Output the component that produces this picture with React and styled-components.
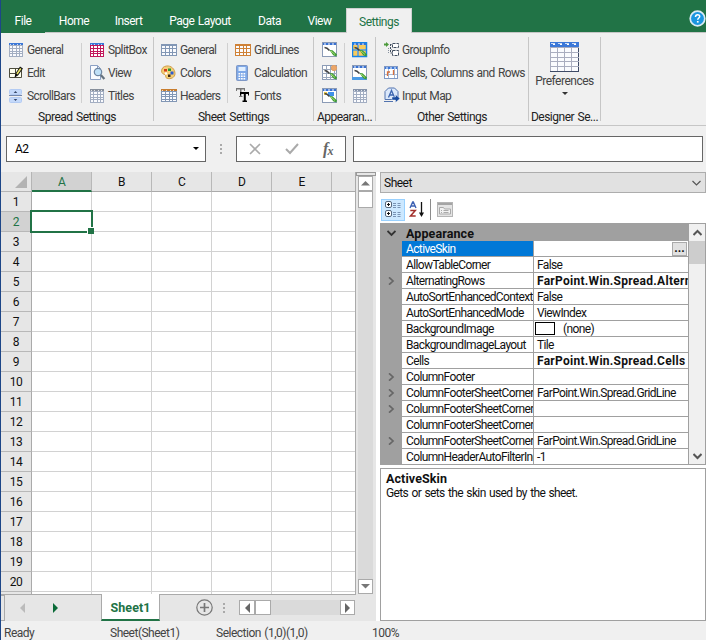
import React from 'react';
import styled, { createGlobalStyle } from 'styled-components';

const tabs = [
  { label: 'File', width: 44 },
  { label: 'Home', width: 58 },
  { label: 'Insert', width: 51 },
  { label: 'Page Layout', width: 92 },
  { label: 'Data', width: 47 },
  { label: 'View', width: 53 },
];

const columns = ['A', 'B', 'C', 'D', 'E'];
const rows = Array.from({ length: 20 }, (_, i) => i + 1);

const properties = [
  { name: 'ActiveSkin', value: '', selected: true },
  { name: 'AllowTableCorner', value: 'False' },
  { name: 'AlternatingRows', value: 'FarPoint.Win.Spread.Altern', bold: true, expand: true },
  { name: 'AutoSortEnhancedContext', value: 'False' },
  { name: 'AutoSortEnhancedMode', value: 'ViewIndex' },
  { name: 'BackgroundImage', value: '(none)', swatch: true },
  { name: 'BackgroundImageLayout', value: 'Tile' },
  { name: 'Cells', value: 'FarPoint.Win.Spread.Cells', bold: true },
  { name: 'ColumnFooter', value: '', expand: true },
  { name: 'ColumnFooterSheetCornerH', value: 'FarPoint.Win.Spread.GridLine', expand: true },
  { name: 'ColumnFooterSheetCornerS', value: '', expand: true },
  { name: 'ColumnFooterSheetCornerS', value: '' },
  { name: 'ColumnFooterSheetCornerV', value: 'FarPoint.Win.Spread.GridLine', expand: true },
  { name: 'ColumnHeaderAutoFilterInd', value: '-1' },
];

/* ---------- icons ---------- */

const Table = ({ w = 14, h = 14, head = '#3c78d8', line = '#a3aec2', cell = '#fafbfe', cols = 4, rowCount = 4, top = 2, edge = line }) => {
  const cw = (w - 1) / cols;
  const rh = (h - 1 - top) / rowCount;
  return (
    <svg width={w} height={h} shapeRendering="crispEdges">
      <rect width={w} height={h} fill={cell} />
      {Array.from({ length: cols + 1 }, (_, i) => (
        <rect key={`c${i}`} x={Math.round(i * cw)} y="0" width="1" height={h} fill={i === cols ? edge : line} />
      ))}
      {Array.from({ length: rowCount + 1 }, (_, i) => (
        <rect key={`r${i}`} x="0" y={Math.round(top + i * rh)} width={w} height="1" fill={i === rowCount ? edge : line} />
      ))}
      <rect width={w} height={top} fill={head} />
      {top > 1 &&
        Array.from({ length: cols }, (_, i) => (
          <rect key={`h${i}`} x={Math.round(i * cw) + 1} y="1" width={top > 3 ? 4 : 1} height="1" fill="#fff" opacity="0.75" />
        ))}
      {top > 3 &&
        Array.from({ length: cols }, (_, i) => (
          <rect key={`t${i}`} x={Math.round(i * cw) + 3} y="2" width="2" height="1" fill="#fff" />
        ))}
    </svg>
  );
};

const EditIcon = () => (
  <svg width="14" height="14">
    <path d="M.5 2.5h12v9H.5zM.5 7.5h6M6.5 2.5v9" fill="#fffff0" stroke="#4d4d3d" />
    <path d="M5.5 11.5l1.2-4.500L11 .5 14 2.4 9 9.500z" fill="#111" />
    <path d="M8 8l3.800-5.500" stroke="#f0e868" strokeWidth="1.600" />
  </svg>
);

const ScrollBarsIcon = () => (
  <svg width="14" height="14">
    <rect x=".5" y=".5" width="12" height="5" rx="1" fill="#c4d9fa" stroke="#b3cbf3" />
    <rect x=".5" y="8.500" width="12" height="5" rx="1" fill="#c4d9fa" stroke="#b3cbf3" />
    <path d="M4.700 4l1.800-2 1.800 2zM4.700 10l1.800 2 1.800-2z" fill="#37496b" />
    <path d="M0 6.500h13" stroke="#7386a8" />
  </svg>
);

const ViewIcon = () => (
  <svg width="16" height="16">
    <path d="M.5 .5h7l3 3v11H.5z" fill="#fafcff" stroke="#8ba0c4" />
    <path d="M7.500 .5v3h3" fill="none" stroke="#8ba0c4" />
    <circle cx="8" cy="7" r="3.700" fill="#bfe0f7" stroke="#6f87a3" strokeWidth="1.200" />
    <path d="M10.800 10l3.600 4" stroke="#65727f" strokeWidth="2.200" />
  </svg>
);

const ColorsIcon = () => (
  <svg width="15" height="15">
    <path d="M5.500 1C10 .4 14 4 14 8.600c0 4-4.400 6-8.200 4.600-2-.8-.4-2.800-2-3.600C2.400 9 .6 8.600 .6 6 .6 3.200 2.600 1.300 5.500 1z" fill="#f5cf77" stroke="#cf9d48" />
    <rect x="3" y="4" width="3" height="2.500" fill="#d33a1c" />
    <rect x="7" y="3.500" width="3" height="2.500" fill="#2d9a35" />
    <rect x="9.500" y="6.500" width="3" height="3" fill="#2c5bd0" />
    <rect x="7" y="9.500" width="2.500" height="2.500" fill="#3a2a1c" />
    <circle cx="5" cy="8.500" r="1.200" fill="#fff" />
  </svg>
);

const CalculatorIcon = () => (
  <svg width="13" height="16">
    <rect x=".5" y=".5" width="11" height="15" rx="1" fill="#7fa9e8" stroke="#7e97c4" />
    <rect x="2.500" y="2" width="7" height="4" fill="#e1efff" />
    {[8, 10.500, 13].map((y) =>
      [2.500, 5, 7.500].map((x) => <rect key={`${x}-${y}`} x={x} y={y} width="1.700" height="1.500" fill="#fff" />)
    )}
  </svg>
);

const FontsIcon = () => (
  <svg width="15" height="15">
    <path d="M0 0h9v3H8V1.500H5.500V8h1v1H3V8h1V1.500H1V3H0z" fill="#777" />
    <path d="M4 4h9v3.500h-1V6H9.800v6.500H11V14H6.500v-1.500h1.300V6H5v1.500H4z" fill="#000" />
  </svg>
);

// small sheet with a paint brush over it
const SkinIcon = ({ variant }) => {
  const selected = variant === 'selected';
  return (
    <svg width="16" height="16">
      <rect x=".5" y=".5" width="14" height="14" fill={selected ? '#f8cb5c' : '#fff'} stroke={selected ? '#1683e8' : '#8b9bb6'} />
      {variant === 'grid' && <path d="M0 4.500h15M0 8.500h15M0 12.500h15M4.500 1v14M8.500 1v14M12.500 1v14" stroke="#9aa7bb" />}
      {variant !== 'grid' && <rect x="1" y="1" width="13" height="2" fill="#3971d1" />}
      {variant !== 'grid' && <path d="M2 2h2M6 2h2M10 2h2" stroke="#fff" />}
      {selected && <path d="M1 8h13M6 3v11" stroke="#4b9be6" strokeWidth="1.500" />}
      {selected && <rect x=".5" y=".5" width="14" height="14" fill="none" stroke="#1683e8" strokeWidth="1.500" />}
      {variant === 'line' && <rect x="0" y="12" width="15" height="3" fill="#4b9be6" />}
      {variant === 'cell' && <rect x="6" y="4" width="6" height="4" fill="#3f91e9" />}
      {variant === 'cell' && <rect x="2" y="4" width="3" height="3" fill="#f4d24d" />}
      <path d="M2.500 5.500c2 0 3 .5 5 3" stroke="#444" strokeWidth="1.500" fill="none" />
      <path d="M7.500 8l3 .2 4.500 4.300-.8 2-3-1.200z" fill="#3f9c37" />
      <path d="M9 9l4 3.500" stroke="#a8dc6f" />
      {variant === 'grid' && <circle cx="12" cy="3" r="2.700" fill="#eda667" stroke="#dda06a" />}
    </svg>
  );
};

const GroupInfoIcon = () => (
  <svg width="16" height="15">
    <path d="M0 1.500h2V0l3 2.500L2 5V3.500H0z" fill="#4c9a3c" />
    <path d="M4.500 6v6M7 2.500h2M7 7.500h1" stroke="#8892a0" strokeDasharray="1 1" />
    <path d="M8.500 1.500h6v4h-6zM8.500 8.500h6v5h-6z" fill="#fff" stroke="#424f60" strokeDasharray="3 1" />
    <path d="M6.500 2v9h2" fill="none" stroke="#424f60" strokeDasharray="2 1" />
  </svg>
);

const CellsIcon = () => (
  <svg width="15" height="14">
    <rect x=".5" y=".5" width="13" height="12" fill="#fff" stroke="#7f98c4" />
    <rect x="1" y="1" width="12" height="2" fill="#3c78d8" />
    <path d="M1 8.500h12M4.500 3v9M10.500 3v9" stroke="#a8b9d6" />
    <path d="M3.500 10V6h2.500M9.500 4v5" stroke="#d8703a" fill="none" strokeWidth="1.300" />
    <path d="M2 2h2M6 2h2M10 2h2" stroke="#fff" />
  </svg>
);

const InputMapIcon = () => (
  <svg width="17" height="17">
    <path d="M1 12.500V4.500L4.500 1h6L14 4.500v8z" fill="#dbe8fb" stroke="#5273ae" />
    <path d="M0 14.500h9" stroke="#5273ae" />
    <path d="M4.500 10.500l3-7 3 7M5.500 8h4" stroke="#3d66b0" strokeWidth="1.300" fill="none" />
    <path d="M8 10h3.500V7.500l4.500 4-4.500 4V13H8z" fill="#174a9f" stroke="#fff" strokeWidth=".4" />
  </svg>
);

const HelpIcon = () => (
  <svg width="17" height="17">
    <circle cx="8.500" cy="8.500" r="7.300" fill="#1b96e0" stroke="#dcebf5" strokeWidth="1.700" />
    <path d="M6.500 7c0-3 4.200-2.800 4.200-.5 0 1.500-2 1.500-2 3.300" stroke="#fff" strokeWidth="1.500" fill="none" />
    <rect x="7.900" y="11" width="1.700" height="1.600" fill="#fff" />
  </svg>
);

const Arrow = ({ dir = 'down', size = 5, color = '#666' }) => {
  const paths = {
    down: [`M0 0h${size * 2}l-${size} ${size}z`, size * 2, size],
    up: [`M0 ${size}h${size * 2}l-${size}-${size}z`, size * 2, size],
    left: [`M${size} 0v${size * 2}l-${size}-${size}z`, size, size * 2],
    right: [`M0 0v${size * 2}l${size}-${size}z`, size, size * 2],
  };
  const [d, w, h] = paths[dir];
  return (
    <svg width={w} height={h}>
      <path d={d} fill={color} />
    </svg>
  );
};

const Chevron = ({ dir = 'down', color = '#555', thick = 1.2 }) => {
  const d = { down: 'M.5 2l4 4 4-4', up: 'M.5 6l4-4 4 4', right: 'M2 .3l4 3.700-4 3.700' };
  return (
    <svg width="9" height="8" viewBox="0 0 9 8">
      <path d={d[dir]} stroke={color} strokeWidth={thick} fill="none" />
    </svg>
  );
};

const CategorizedIcon = () => (
  <svg width="17" height="17">
    {[0.5, 9.5].map((y) => (
      <g key={y}>
        <rect x=".5" y={y} width="6" height="6" rx="1.500" fill="#fff" stroke="#56677c" />
        <path d={`M2 ${y + 3}h3M3.500 ${y + 1.5}v3`} stroke="#111" />
        <path d={`M8 ${y + 2}h3M12.500 ${y + 2}h3M8 ${y + 4}h3M12.500 ${y + 4}h3M8 ${y + 6}h3M12.500 ${y + 6}h3`} stroke="#7892b3" />
      </g>
    ))}
  </svg>
);

const SortIcon = () => (
  <svg width="16" height="17">
    <path d="M1 7l2.700-6h.6L7 7M2 5h4" stroke="#3d62b3" strokeWidth="1.400" fill="none" />
    <path d="M1.300 9.500h5L1.500 15h5.200" stroke="#a3302c" strokeWidth="1.500" fill="none" />
    <path d="M12.500 1v13" stroke="#111" strokeWidth="1.300" />
    <path d="M10 11.500h5L12.500 16z" fill="#111" />
  </svg>
);

const PagesIcon = () => (
  <svg width="16" height="15">
    <rect x=".5" y=".5" width="15" height="14" fill="#e4e4e4" stroke="#b5b5b5" />
    <path d="M1 2h14" stroke="#a5a5a5" strokeWidth="2" />
    <path d="M2.500 5.500h4l1 1.500h6v5h-11z" fill="#f2f2f2" stroke="#aaa" />
    <path d="M4 8.500h1M6.500 8.500h5M4 10.500h1M6.500 10.500h5" stroke="#aaa" />
  </svg>
);

const ribbon = [
  {
    label: 'Spread Settings',
    width: 153,
    cols: [
      { pad: 8, width: 80, icon: 18, items: [['General', <Table />], ['Edit', <EditIcon />], ['ScrollBars', <ScrollBarsIcon />]] },
      {
        pad: 9,
        width: 72,
        icon: 18,
        items: [['SplitBox', <Table line="#c2185b" cell="#fff" />], ['View', <ViewIcon />], ['Titles', <Table head="#868e9b" />]],
      },
    ],
  },
  {
    label: 'Sheet Settings',
    width: 160,
    cols: [
      {
        pad: 7,
        width: 73,
        icon: 19,
        items: [
          ['General', <Table w={16} h={12} head="#8297b5" line="#8297b5" top={1} rowCount={3} />],
          ['Colors', <ColorsIcon />],
          ['Headers', <Table w={16} h={13} head="#c87d2e" line="#8297b5" />],
        ],
      },
      {
        pad: 8,
        width: 85,
        icon: 19,
        items: [
          ['GridLines', <Table w={16} h={12} head="#cf8136" line="#cf8136" top={1} rowCount={3} />],
          ['Calculation', <Indent><CalculatorIcon /></Indent>],
          ['Fonts', <Indent><FontsIcon /></Indent>],
        ],
      },
    ],
  },
  {
    label: 'Appearan...',
    width: 62,
    cols: [
      { pad: 8, width: 30, icon: 16, items: [['', <SkinIcon />], ['', <SkinIcon variant="grid" />], ['', <SkinIcon variant="cell" />]] },
      { pad: 8, width: 30, icon: 16, items: [['', <SkinIcon variant="selected" />], ['', <SkinIcon variant="line" />], ['', <Indent><Table head="#8492aa" /></Indent>]] },
    ],
  },
  {
    label: 'Other Settings',
    width: 153,
    cols: [
      { pad: 8, width: 152, icon: 18, items: [['GroupInfo', <GroupInfoIcon />], ['Cells, Columns and Rows', <CellsIcon />], ['Input Map', <InputMapIcon />]] },
    ],
  },
];

function Indent({ children }) {
  return <IndentBox>{children}</IndentBox>;
}

const App = () => (
  <>
    <GlobalStyle />
    <Window>
      <TabStrip>
        {tabs.map((tab) => (
          <Tab key={tab.label} $width={tab.width}>
            {tab.label}
          </Tab>
        ))}
        <Tab $active $width={66}>
          Settings
        </Tab>
        <Help>
          <HelpIcon />
        </Help>
      </TabStrip>

      <Ribbon>
        {ribbon.map((group) => (
          <Group key={group.label} $width={group.width}>
            <GroupBody>
              {group.cols.map((col, i) => (
                <RibbonColumn key={i} $pad={col.pad} $width={col.width} $split={i < group.cols.length - 1}>
                  {col.items.map(([label, icon], n) => (
                    <RibbonItem key={n}>
                      <IconSlot $width={col.icon}>{icon}</IconSlot>
                      {label}
                    </RibbonItem>
                  ))}
                </RibbonColumn>
              ))}
            </GroupBody>
            <GroupLabel>{group.label}</GroupLabel>
          </Group>
        ))}
        <Group $width={72}>
          <LargeButton>
            <Table w={29} h={30} line="#a9adbf" edge="#3d4a66" top={5} rowCount={5} />
            <span>Preferences</span>
            <Arrow size={3} color="#333" />
          </LargeButton>
          <GroupLabel>Designer Se...</GroupLabel>
        </Group>
      </Ribbon>

      <FormulaBar>
        <NameBox>
          A2
          <Arrow size={3} color="#000" />
        </NameBox>
        <Dots $gap={30} />
        <FormulaButtons>
          <svg width="12" height="12">
            <path d="M1 1l10 10M11 1L1 11" stroke="#aaa" strokeWidth="1.600" />
          </svg>
          <svg width="14" height="12">
            <path d="M1 6l4 4 8-9" stroke="#aaa" strokeWidth="2" fill="none" />
          </svg>
          <Fx>
            f<sub>x</sub>
          </Fx>
        </FormulaButtons>
        <FormulaInput />
      </FormulaBar>

      <Main>
        <Spread>
          <SheetArea>
            <Sheet>
              <HeaderRow>
                <Corner>
                  <svg width="12" height="12">
                    <path d="M12 0v12H0z" fill="#b3b3b3" />
                  </svg>
                </Corner>
                {columns.map((c) => (
                  <ColumnHeader key={c} $active={c === 'A'}>
                    {c}
                  </ColumnHeader>
                ))}
                <ColumnHeader $last />
              </HeaderRow>
              {rows.map((r) => (
                <Row key={r}>
                  <RowHeader $active={r === 2}>{r}</RowHeader>
                  {columns.map((c) => (
                    <Cell key={c}>{r === 2 && c === 'A' && <Selection />}</Cell>
                  ))}
                  <Cell $last />
                </Row>
              ))}
              <Row>
                <RowHeader />
                {columns.map((c) => (
                  <Cell key={c} />
                ))}
              </Row>
            </Sheet>
            <VerticalScroll>
              <SplitHandle />
              <ScrollButton $h={15}>
                <Arrow dir="up" size={4.5} color="#777" />
              </ScrollButton>
              <ScrollButton $h={17} />
              <Track />
              <ScrollButton $h={15}>
                <Arrow size={4.5} color="#777" />
              </ScrollButton>
            </VerticalScroll>
          </SheetArea>
          <SheetTabs>
            <TabGrip />
            <Pager>
              <Arrow dir="left" size={5} color="#bbb" />
              <Arrow dir="right" size={5} color="#0b6b38" />
            </Pager>
            <SheetTab>Sheet1</SheetTab>
            <NewSheet>
              <svg width="17" height="17">
                <circle cx="8.500" cy="8.500" r="7.700" fill="none" stroke="#777" strokeWidth="1.200" />
                <path d="M4 8.500h9M8.500 4v9" stroke="#777" strokeWidth="1.700" />
              </svg>
            </NewSheet>
            <Dots $gap={22} />
            <HorizontalScroll>
              <ScrollButton $w={16} $h={15}>
                <Arrow dir="left" size={5} color="#666" />
              </ScrollButton>
              <ScrollButton $w={16} $h={15} />
              <Track />
              <ScrollButton $w={15} $h={15}>
                <Arrow dir="right" size={5} color="#666" />
              </ScrollButton>
            </HorizontalScroll>
          </SheetTabs>
        </Spread>

        <Panel>
          <ObjectSelect>
            Sheet
            <Chevron />
          </ObjectSelect>
          <PanelTools>
            <ToolButton $active>
              <CategorizedIcon />
            </ToolButton>
            <ToolButton>
              <SortIcon />
            </ToolButton>
            <ToolDivider />
            <ToolButton>
              <PagesIcon />
            </ToolButton>
          </PanelTools>
          <PropertyGrid>
            <PropertyList>
              <Category>
                <Expander>
                  <Chevron color="#333" thick={1.8} />
                </Expander>
                Appearance
              </Category>
              {properties.map((p, i) => (
                <Property key={i}>
                  <Expander>{p.expand && <Chevron dir="right" color="#666" thick={1.7} />}</Expander>
                  <PropertyName $selected={p.selected}>{p.name}</PropertyName>
                  <PropertyValue $bold={p.bold}>
                    {p.swatch && <Swatch />}
                    {p.value}
                    {p.selected && <Browse>...</Browse>}
                  </PropertyValue>
                </Property>
              ))}
            </PropertyList>
            <PanelScroll>
              <ScrollEnd>
                <Chevron dir="up" thick={2} />
              </ScrollEnd>
              <Thumb />
              <ScrollEnd $bottom>
                <Chevron thick={2} />
              </ScrollEnd>
            </PanelScroll>
          </PropertyGrid>
          <Description>
            <b>ActiveSkin</b>
            <p>Gets or sets the skin used by the sheet.</p>
          </Description>
        </Panel>
      </Main>

      <StatusBar>
        <Status $width={106}>Ready</Status>
        <Status $width={106}>Sheet(Sheet1)</Status>
        <Status $width={156}>Selection (1,0)(1,0)</Status>
        <Status>100%</Status>
      </StatusBar>
    </Window>
  </>
);

const GlobalStyle = createGlobalStyle`
  * {
    box-sizing: border-box;
  }

  body {
    margin: 0;
    background: #f0f0f0;
    font-family: Roboto, 'Liberation Sans', sans-serif;
    font-size: 12px;
    letter-spacing: -0.63px;
    word-spacing: 1px;
    color: #111;
  }

  svg {
    display: block;
    flex-shrink: 0;
  }
`;

const Window = styled.div`
  display: flex;
  flex-direction: column;
  width: 706px;
  height: 640px;
  overflow: hidden;
  border-left: 1px solid #1d4688;
  background: #f0f0f0;
`;

const TabStrip = styled.nav`
  display: flex;
  align-items: flex-end;
  height: 33px;
  background: linear-gradient(#217346 32px, #c6c6c6 32px);
  letter-spacing: -0.5px;
`;

const Tab = styled.div`
  display: flex;
  align-items: center;
  justify-content: center;
  width: ${({ $width }) => $width}px;
  height: 25px;
  padding-top: 1px;
  color: ${({ $active }) => ($active ? '#217346' : '#fff')};
  background: ${({ $active }) => ($active ? '#f0f0f0' : 'none')};
  border: ${({ $active }) => ($active ? '1px solid #d0d0d0' : '0')};
  border-bottom: 0;

  &:first-child {
    background: #217346;
  }
`;

const Help = styled.div`
  margin: 0 0 6px auto;
`;

const Ribbon = styled.section`
  display: flex;
  height: 93px;
  padding-top: 4px;
  border-bottom: 1px solid #c6c6c6;
  color: #444;
`;

const Group = styled.div`
  display: flex;
  flex-direction: column;
  justify-content: space-between;
  width: ${({ $width }) => $width}px;
  height: 84px;
  border-right: 1px solid #c6c6c6;
`;

const GroupBody = styled.div`
  display: flex;
  height: 71px;
`;

const RibbonColumn = styled.div`
  position: relative;
  width: ${({ $width }) => $width}px;
  padding-left: ${({ $pad }) => $pad}px;
  padding-top: 1px;

  &::after {
    content: '';
    display: ${({ $split }) => ($split ? 'block' : 'none')};
    position: absolute;
    right: -1px;
    top: 6px;
    width: 1px;
    height: 60px;
    background: #d0d0d0;
  }
`;

const RibbonItem = styled.div`
  display: flex;
  align-items: center;
  height: 23px;
  white-space: nowrap;
`;

const IconSlot = styled.span`
  width: ${({ $width }) => $width}px;
  flex-shrink: 0;
`;

const IndentBox = styled.span`
  display: block;
  padding-left: 1px;
`;

const GroupLabel = styled.div`
  height: 13px;
  line-height: 18px;
  text-align: center;
  white-space: nowrap;
  letter-spacing: -0.5px;
  color: #222;
`;

const LargeButton = styled.div`
  display: flex;
  flex-direction: column;
  align-items: center;
  padding-top: 5px;
  letter-spacing: -0.5px;

  span {
    margin: 3px 0 4px;
    line-height: 13px;
  }
`;

const FormulaBar = styled.div`
  display: flex;
  align-items: center;
  height: 46px;
  padding-left: 5px;
`;

const Box = styled.div`
  display: flex;
  align-items: center;
  height: 26px;
  border: 1px solid #666;
  background: #fff;
`;

const NameBox = styled(Box)`
  justify-content: space-between;
  width: 200px;
  padding: 0 6px 1px 8px;
  color: #000;
`;

const Dots = styled.div`
  width: ${({ $gap }) => $gap}px;
  height: 10px;
  background: linear-gradient(#aaa 2px, transparent 2px) center top / 2px 4px repeat-y;
`;

const FormulaButtons = styled(Box)`
  width: 110px;
  padding: 0 12px;
  justify-content: space-between;
`;

const Fx = styled.span`
  font: italic bold 16px 'Liberation Serif', serif;
  color: #666;

  sub {
    font-size: 12px;
    line-height: 0;
    vertical-align: -1px;
  }
`;

const FormulaInput = styled(Box)`
  width: 350px;
  margin-left: 7px;
`;

const Main = styled.main`
  display: flex;
  height: 449px;
  background: #fff;
`;

const Spread = styled.section`
  width: 375px;
  background: #e6e6e6;
`;

const SheetArea = styled.div`
  display: flex;
  height: 422px;
`;

const Sheet = styled.div`
  width: 355px;
  height: 423px;
  overflow: hidden;
  background: #fff;
  border-right: 1px solid #aaa;
  border-bottom: 1px solid #aaa;
`;

const HeaderRow = styled.div`
  display: flex;
  height: 20px;
`;

const Corner = styled.div`
  display: flex;
  align-items: flex-end;
  justify-content: flex-end;
  width: 31px;
  flex-shrink: 0;
  padding: 0 4px 3px 0;
  background: #e6e6e6;
  border-right: 1px solid #b5b5b5;
  border-bottom: 1px solid #b5b5b5;
`;

const ColumnHeader = styled.div`
  width: ${({ $last }) => ($last ? 24 : 60)}px;
  flex-shrink: 0;
  line-height: 20px;
  text-align: center;
  color: ${({ $active }) => ($active ? '#217346' : '#111')};
  background: ${({ $active }) => ($active ? '#d2d2d2' : '#e6e6e6')};
  border-right: ${({ $last }) => ($last ? 0 : 1)}px solid #b8b8b8;
  border-bottom: ${({ $active }) => ($active ? '2px solid #217346' : '1px solid #aaa')};
`;

const Row = styled.div`
  display: flex;
  height: 20px;
`;

const RowHeader = styled.div`
  width: 31px;
  flex-shrink: 0;
  line-height: 21px;
  text-align: center;
  letter-spacing: -0.4px;
  color: ${({ $active }) => ($active ? '#217346' : '#111')};
  background: ${({ $active }) => ($active ? '#d2d2d2' : '#e6e6e6')};
  border-right: 1px solid ${({ $active }) => ($active ? '#217346' : '#aaa')};
  border-bottom: 1px solid #b8b8b8;
`;

const Cell = styled.div`
  position: relative;
  width: ${({ $last }) => ($last ? 24 : 60)}px;
  flex-shrink: 0;
  border-right: 1px solid #d2d2d2;
  border-bottom: 1px solid #d2d2d2;
`;

const Selection = styled.div`
  position: absolute;
  z-index: 1;
  inset: -2px;
  border: 2px solid #217346;

  &::after {
    content: '';
    position: absolute;
    right: -3px;
    bottom: -3px;
    width: 6px;
    height: 6px;
    background: #217346;
    border: solid #fff;
    border-width: 1px 0 0 1px;
  }
`;

const VerticalScroll = styled.div`
  display: flex;
  flex-direction: column;
  align-items: center;
  width: 20px;
  padding-right: 1px;
  background: linear-gradient(90deg, #e6e6e6 2px, #dadada 2px, #dadada 17px, #e6e6e6 17px);
`;

const SplitHandle = styled.div`
  width: 20px;
  height: 4px;
  border: 1px solid #999;
  background: #e6e6e6;
`;

const ScrollButton = styled.div`
  display: flex;
  align-items: center;
  justify-content: center;
  flex-shrink: 0;
  width: ${({ $w = 15 }) => $w}px;
  height: ${({ $h }) => $h}px;
  border: 1px solid #aaa;
  background: #fff;
`;

const Track = styled.div`
  flex: 1;
`;

const SheetTabs = styled.div`
  display: flex;
  align-items: center;
  height: 27px;
`;

const TabGrip = styled.div`
  width: 4px;
  height: 26px;
  border: 1px solid #aaa;
  border-left: 0;
`;

const Pager = styled.div`
  display: flex;
  align-items: center;
  justify-content: space-between;
  width: 96px;
  padding: 0 43px 0 15px;
`;

const SheetTab = styled.div`
  width: 59px;
  height: 27px;
  line-height: 27px;
  text-align: center;
  font-weight: bold;
  font-size: 12.5px;
  letter-spacing: 0.1px;
  color: #217346;
  background: #fff;
  border: 1px solid #aaa;
  border-top: 0;
  border-bottom: 2px solid #217346;
`;

const NewSheet = styled.div`
  margin-left: 36px;
`;

const HorizontalScroll = styled.div`
  display: flex;
  width: 116px;
  margin-left: 4px;
  background: #dadada;
`;

const Panel = styled.aside`
  width: 326px;
  margin-left: 4px;
  flex-shrink: 0;
`;

const ObjectSelect = styled.div`
  display: flex;
  align-items: center;
  justify-content: space-between;
  height: 21px;
  padding: 0 4px 0 3px;
  border: 1px solid #adadad;
  background: #e1e1e1;
  letter-spacing: -0.5px;
`;

const PanelTools = styled.div`
  display: flex;
  align-items: center;
  height: 30px;
  padding: 3px 0 0 1px;
`;

const ToolButton = styled.div`
  display: flex;
  align-items: center;
  justify-content: center;
  width: 24px;
  height: 22px;
  background: ${({ $active }) => ($active ? '#cce8ff' : 'none')};
  border: 1px solid ${({ $active }) => ($active ? '#99d1ff' : 'transparent')};
`;

const ToolDivider = styled.div`
  width: 1px;
  height: 21px;
  margin: 0 2px 0 1px;
  background: #8c8c8c;
`;

const PropertyGrid = styled.div`
  display: flex;
  height: 242px;
  border: 1px solid #a0a0a0;
`;

const PropertyList = styled.div`
  width: 308px;
  height: 240px;
  overflow: hidden;
  background: #a0a0a0;
`;

const Category = styled.div`
  display: flex;
  align-items: center;
  height: 17px;
  padding-top: 1px;
  font-size: 12.5px;
  font-weight: bold;
  letter-spacing: 0.1px;

  > :first-child {
    margin-right: 4px;
  }
`;

const Property = styled.div`
  display: flex;
  height: 16px;
`;

const Expander = styled.div`
  display: flex;
  align-items: center;
  justify-content: center;
  width: 21px;
  flex-shrink: 0;
`;

const PropertyName = styled.div`
  width: 132px;
  padding-left: 4px;
  line-height: 17px;
  overflow: hidden;
  white-space: nowrap;
  border-right: 1px solid #a0a0a0;
  border-bottom: 1px solid #a0a0a0;
  color: ${({ $selected }) => ($selected ? '#fff' : '#111')};
  background: ${({ $selected }) => ($selected ? '#0078d7' : '#fff')};
`;

const PropertyValue = styled.div`
  display: flex;
  align-items: flex-start;
  width: 154px;
  padding-left: 3px;
  line-height: 17px;
  overflow: hidden;
  white-space: nowrap;
  font-weight: ${({ $bold }) => ($bold ? 'bold' : 'normal')};
  letter-spacing: ${({ $bold }) => ($bold ? '0.28px' : '-0.63px')};
  background: #fff;
  border-bottom: 1px solid #a0a0a0;
`;

const Swatch = styled.span`
  width: 20px;
  height: 13px;
  margin: 1px 8px 0 -2px;
  border: 1px solid #000;
`;

const Browse = styled.span`
  width: 15px;
  height: 14px;
  margin: 1px 1px 0 auto;
  line-height: 11px;
  text-align: center;
  font-weight: bold;
  letter-spacing: 0;
  border: 1px solid #aaa;
  background: #e1e1e1;
`;

const PanelScroll = styled.div`
  display: flex;
  flex-direction: column;
  width: 16px;
  background: #f0f0f0;
`;

const ScrollEnd = styled.div`
  display: flex;
  align-items: center;
  justify-content: center;
  height: 17px;
  margin-top: ${({ $bottom }) => ($bottom ? 'auto' : 0)};
`;

const Thumb = styled.div`
  height: 23px;
  background: #cdcdcd;
`;

const Description = styled.div`
  height: 153px;
  margin-top: 3px;
  padding: 2px 5px;
  border: 1px solid #a0a0a0;

  b {
    display: block;
    font-size: 12.5px;
    line-height: 15px;
    letter-spacing: 0.1px;
  }

  p {
    margin: 0;
    line-height: 15px;
  }
`;

const StatusBar = styled.footer`
  display: flex;
  height: 19px;
  padding: 5px 0 0 3px;
  line-height: 14px;
  letter-spacing: -0.5px;
  color: #444;
`;

const Status = styled.span`
  width: ${({ $width }) => ($width ? `${$width}px` : 'auto')};
`;

export default App;
